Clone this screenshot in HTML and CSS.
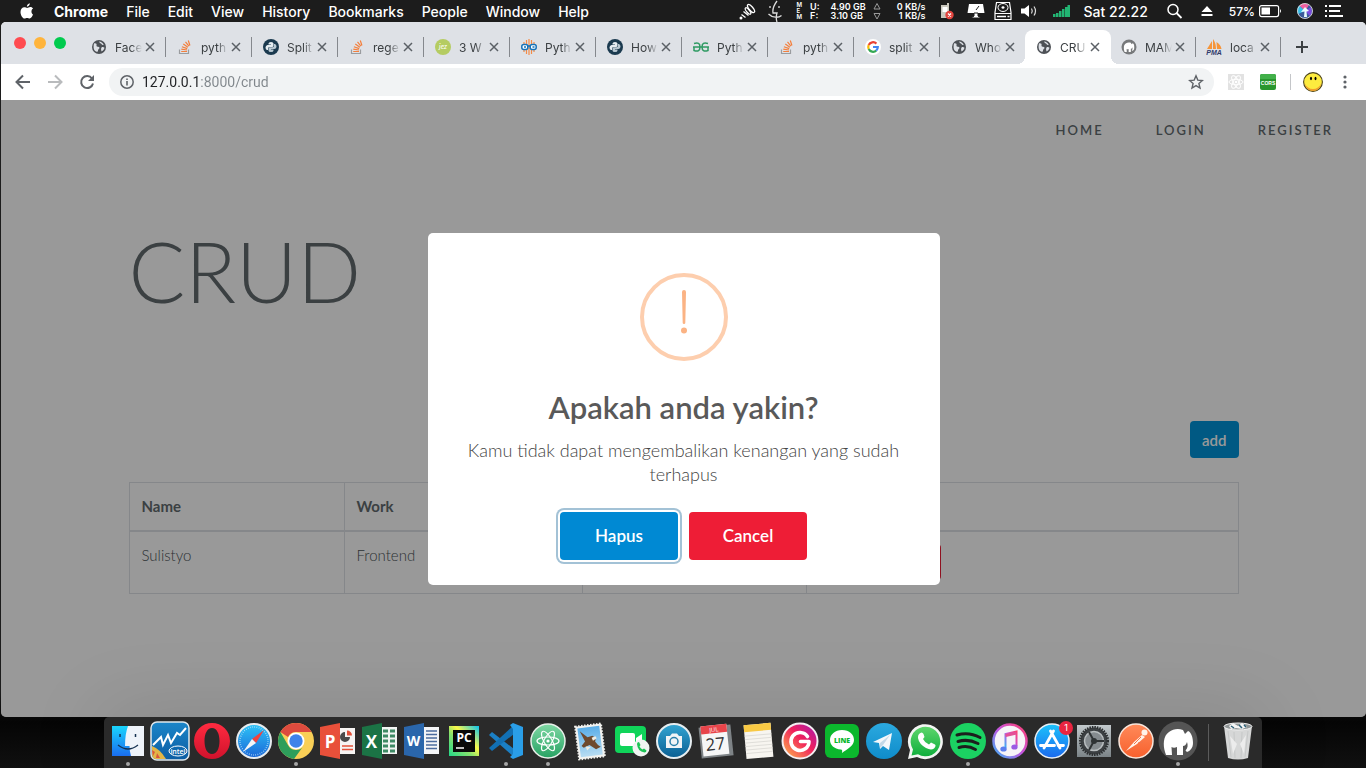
FILE: index.html
```html
<!DOCTYPE html>
<html lang="id">
<head>
<meta charset="utf-8">
<meta name="viewport" content="width=device-width, initial-scale=1">
<title>CRUD</title>
<link rel="stylesheet" href="styles.css">
</head>
<body>
<svg class="defs" aria-hidden="true">
  <defs>
    <linearGradient id="gFinder" x2="0" y2="1"><stop stop-color="#1ad5fd"/><stop offset="1" stop-color="#1a6df0"/></linearGradient>
    <linearGradient id="gIntel" x2="0" y2="1"><stop stop-color="#1c86c9"/><stop offset="1" stop-color="#0c5da3"/></linearGradient>
    <linearGradient id="gOpera" x2="0" y2="1"><stop stop-color="#ff2b40"/><stop offset="1" stop-color="#d0122c"/></linearGradient>
    <linearGradient id="gSafari" x2="0" y2="1"><stop stop-color="#2dc4f7"/><stop offset="1" stop-color="#1b67d8"/></linearGradient>
    <linearGradient id="gAtom" x2="0" y2="1"><stop stop-color="#7fd8a4"/><stop offset="1" stop-color="#27a263"/></linearGradient>
    <linearGradient id="gSky" x2="0" y2="1"><stop stop-color="#5aaee8"/><stop offset="1" stop-color="#b7dcf2"/></linearGradient>
    <linearGradient id="gCam" x2="0" y2="1"><stop stop-color="#33a5d2"/><stop offset="1" stop-color="#0a5f93"/></linearGradient>
    <linearGradient id="gInsta" x1="1" y1="0" x2="0" y2="1"><stop stop-color="#a318b4"/><stop offset=".45" stop-color="#f0205c"/><stop offset="1" stop-color="#ffc04a"/></linearGradient>
    <linearGradient id="gTele" x2="0" y2="1"><stop stop-color="#2ba9df"/><stop offset="1" stop-color="#0f8cca"/></linearGradient>
    <linearGradient id="gWa" x2="0" y2="1"><stop stop-color="#5dd66c"/><stop offset="1" stop-color="#10ae3c"/></linearGradient>
    <linearGradient id="gTunes" x1="1" y1="0" x2="0" y2="1"><stop stop-color="#ff3d6c"/><stop offset=".5" stop-color="#c355e0"/><stop offset="1" stop-color="#36b4f5"/></linearGradient>
    <linearGradient id="gStore" x2="0" y2="1"><stop stop-color="#1cc3fb"/><stop offset="1" stop-color="#1a69ee"/></linearGradient>
    <linearGradient id="gPrefs" x2="0" y2="1"><stop stop-color="#c2c9cc"/><stop offset="1" stop-color="#7c8488"/></linearGradient>
    <linearGradient id="gPost" x2="0" y2="1"><stop stop-color="#ff8a5a"/><stop offset="1" stop-color="#f7602d"/></linearGradient>
    <linearGradient id="gPyc" x1="0" y1="1" x2="1" y2="0"><stop stop-color="#21d789"/><stop offset=".4" stop-color="#8be36c"/><stop offset=".6" stop-color="#fcf84a"/><stop offset="1" stop-color="#07c3f2"/></linearGradient>
  </defs>
  <symbol id="globe" viewBox="0 0 16 16"><circle cx="8" cy="8" r="7" fill="#4d5156"/><path d="M3 4.500C5 4 6 5 5.500 6.500S8 7.500 8.500 8.500 7 10 7 11.500 6 13 5 12.500C3 11.500 2 9 3 4.500ZM8 2.500c2 .2 4 1.500 4.700 3.200-1 .8-1.700.2-2.200-.7S8.500 4.500 8 2.500ZM10.500 8.500c1-.8 2.200-.4 3 .2-.4 1.800-1.500 3-2.800 3.700-.7-1-.9-2.500-.2-3.900Z" fill="#dee1e6"/></symbol>
  <symbol id="stack" viewBox="0 0 16 16"><path d="M2.500 10.500v4h9v-4" fill="none" stroke="#9a9c9f" stroke-width="1.200"/><path d="M4.200 12.500h5.800M4.300 10.200l5.700.8M4.900 7.700l5.300 1.900M6.300 5.100l4.600 3.100M8.500 2.900l3.400 4.200M11.300 1.500l1.600 5" stroke="#f47f3c" stroke-width="1.200"/></symbol>
  <symbol id="python" viewBox="0 0 16 16"><circle cx="8" cy="8" r="8" fill="#1b3a4f"/><path d="M5.500 4.500q0-1.500 2.500-1.500t2.500 1.500v2Q10.500 8 9 8H6.500Q5 8 5 9.500V11H4Q2.500 10.500 2.500 8.500T4.500 6H8v-.5H5.500Z" fill="#e6edf2"/><path d="M10.500 11.500q0 1.500-2.500 1.500t-2.500-1.500v-2Q5.500 8.300 7 8.300h2.500Q11 8.300 11 6.800V5h1q1.500.5 1.500 2.500T11.500 10H8v.5h2.500Z" fill="#b9c8d2"/></symbol>
  <symbol id="close" viewBox="0 0 10 10"><path d="M1 1l8 8M9 1l-8 8" stroke="#5b6066" stroke-width="1.500"/></symbol>
  <symbol id="mampGlyph" viewBox="0 0 30 27"><path d="M2 24C0 17 0 8 6 4c4-3 9-4 14-2l2 4 3-3c3 1 5 6 5 12 0 5-3 8-6 9l-1.500-1.500C25 20 25 17 24 14c-1 3-2.500 4-4 4v9h-6v-8c-2 1-4 1-5.500 0L9 27H3Z" fill="#fff"/></symbol>
</svg>

<div class="desktop">
  <header class="menubar">
    <nav class="menus" aria-label="Menu bar">
      <svg class="apple" viewBox="0 0 14 16"><path d="M9.800.3c.1 1.600-1.200 3.300-2.900 3.400C6.700 2.100 8.200.5 9.800.3ZM13 11.600c-.8 2-2 3.900-3.300 3.900-1 0-1.400-.6-2.600-.6s-1.600.6-2.600.6C2.600 15.500.5 12 .5 8.900.5 5.900 2.400 4.200 4.300 4.200c1.200 0 2 .7 2.900.7.800 0 1.700-.8 3.200-.8 1.100 0 2.100.6 2.700 1.500-2.300 1.400-2 4.900-.1 6Z" fill="#fff"/></svg>
      <a class="app-name" href="#">Chrome</a><a href="#">File</a><a href="#">Edit</a><a href="#">View</a><a href="#">History</a><a href="#">Bookmarks</a><a href="#">People</a><a href="#">Window</a><a href="#">Help</a>
    </nav>
    <div class="status">
      <svg width="17" height="18" viewBox="0 0 17 18"><g fill="none" stroke="#fff" stroke-width="1.300"><ellipse cx="12" cy="6.500" rx="2" ry="5" transform="rotate(-40 12 6.500)"/><ellipse cx="9" cy="9" rx="1.500" ry="4" transform="rotate(-40 9 9)"/><path d="M4.500 9.500l5 4M2.500 12.500l4 3"/></g><circle cx="2" cy="16" r="1.500" fill="#fff"/></svg>
      <svg width="23" height="22" viewBox="0 0 23 22"><path d="M12 1c-3 4-4.500 9-4 12h4c-1 3-1 6 0 9M3.500 14c4 4 10 4 13 1.500M5 6v2M14 6v2" fill="none" stroke="#ddd" stroke-width="1.300"/></svg>
      <div class="meters">
        <span class="mem-label"><span>M</span><span>E</span><span>M</span></span>
        <span class="meter-col mem-key"><span>U:</span><span>F:</span></span>
        <span class="meter-col"><span>4.90 GB</span><span>3.10 GB</span></span>
        <svg class="arrows" width="8" height="18" viewBox="0 0 8 18"><path d="M1 7l3-5.500L7 7ZM1 11.500l3 5.500 3-5.500Z" fill="none" stroke="#999"/></svg>
        <span class="meter-col rate"><span>0 KB/s</span><span>1 KB/s</span></span>
      </div>
      <svg width="18" height="18" viewBox="0 0 18 18"><path d="M1 3h6V1h2v15H1Z" fill="#c9c7bd"/><path d="M2.500 5h5v5h-5Z" fill="#fff"/><circle cx="9.500" cy="13" r="4.200" fill="#e2453f"/><path d="M8 11.500l3 3m0-3l-3 3" stroke="#fff" stroke-width="1.200"/></svg>
      <svg width="18" height="18" viewBox="0 0 18 18"><path d="M2 2h14l1.500 9H.5Z" fill="#fff"/><path d="M7 11h4v3l3 2H4l3-2ZM12 4L9 8" fill="#fff" stroke="#1c1c1c"/></svg>
      <svg width="18" height="20" viewBox="0 0 18 20"><path d="M2.500 1.500h13l1.500 10v7H1v-7ZM1 12.500h16" fill="none" stroke="#fff" stroke-width="1.200"/><ellipse cx="9" cy="6.500" rx="5" ry="4" fill="none" stroke="#fff"/><ellipse cx="9" cy="6.500" rx="1.500" ry="1.200" fill="#fff"/><path d="M3 15.500h9M13.500 15.500h2" stroke="#fff" stroke-width="1.500"/></svg>
      <svg width="17" height="14" viewBox="0 0 17 14"><path d="M0 4.500h3.500L8 1v12L3.500 9.500H0Z" fill="#fff"/><path d="M10.500 4.500q1.500 2.500 0 5M13 2.500q3 4.500 0 9" fill="none" stroke="#ddd" stroke-width="1.200"/></svg>
      <svg width="28" height="14" viewBox="0 0 28 14"><path d="M6 10h2.500v3H6ZM9 9h2.500v4H9ZM12 7h2.500v6H12ZM15 5h2.500v8H15ZM18 3h2.500v10H18ZM20.500 1H23v12h-2.500Z" fill="#22b573"/></svg>
      <time class="clock">Sat 22.22</time>
      <svg width="28" height="16" viewBox="0 0 28 16"><circle cx="16" cy="6.500" r="5" fill="none" stroke="#fff" stroke-width="1.500"/><path d="M19.500 10l5 5" stroke="#fff" stroke-width="1.800"/></svg>
      <svg width="26" height="14" viewBox="0 0 26 14"><path d="M13 2l5.500 6h-11ZM7.500 10h11v2h-11Z" fill="#fff"/></svg>
      <span class="battery">57%<svg width="26" height="14" viewBox="0 0 26 14"><rect x=".6" y="1.600" width="19" height="11" rx="2" fill="none" stroke="#fff" stroke-width="1.200"/><path d="M2.500 3.500h8.500v7H2.500ZM21 5q2 2 0 4Z" fill="#fff"/></svg></span>
      <svg width="22" height="18" viewBox="0 0 22 18"><circle cx="11" cy="9" r="7.500" fill="#3b5a9a"/><path d="M11 9L5 3.500Q9 0 15 3Z" fill="#ef5fa0"/><path d="M11 9L4 12Q2 7 5 3.500Z" fill="#38bfe8"/><path d="M11 9l6-4q2 5-1 9Z" fill="#7c4ae0"/><path d="M11 5l4 4-2.500.5L13 15h-3l.5-5.500L7 10Z" fill="#eafcff"/><circle cx="11" cy="9" r="7.500" fill="none" stroke="#ddd" stroke-width=".9"/></svg>
      <svg width="18" height="14" viewBox="0 0 18 14"><path d="M0 2h2M0 7h2M0 12h2M4 2h12M4 7h11M4 12h14" stroke="#fff" stroke-width="1.800"/></svg>
    </div>
  </header>

  <main class="window">
    <div class="tabstrip">
      <div class="lights"><button class="light red" aria-label="Close"></button><button class="light amber" aria-label="Minimize"></button><button class="light green" aria-label="Zoom"></button></div>
      <div class="tabs">
        <div class="tab"><svg class="fav"><use href="#globe"/></svg><a href="#">Face</a><button class="x" aria-label="Close tab"><svg><use href="#close"/></svg></button></div>
        <div class="tab"><svg class="fav"><use href="#stack"/></svg><a href="#">pyth</a><button class="x" aria-label="Close tab"><svg><use href="#close"/></svg></button></div>
        <div class="tab"><svg class="fav"><use href="#python"/></svg><a href="#">Split</a><button class="x" aria-label="Close tab"><svg><use href="#close"/></svg></button></div>
        <div class="tab"><svg class="fav"><use href="#stack"/></svg><a href="#">rege</a><button class="x" aria-label="Close tab"><svg><use href="#close"/></svg></button></div>
        <div class="tab"><svg class="fav" viewBox="0 0 16 16"><circle cx="8" cy="8" r="8" fill="#b5cc62"/><text x="8" y="10" class="fav-jez">jez</text></svg><a href="#">3 W</a><button class="x" aria-label="Close tab"><svg><use href="#close"/></svg></button></div>
        <div class="tab"><svg class="fav" viewBox="0 0 16 16"><path d="M3 3v10M5.500 1v14M8 0v16M10.500 1v14M13 3v10" stroke="#f58b46" stroke-width="1.200"/><rect x=".8" y="5.500" width="6" height="5" rx="2" fill="#fff" stroke="#1673b9" stroke-width="1.500"/><rect x="9.200" y="5.500" width="6" height="5" rx="2" fill="#fff" stroke="#1673b9" stroke-width="1.500"/><path d="M3 8h2M11.500 8h2M6.800 7h2.400" stroke="#1673b9" stroke-width="1.500"/></svg><a href="#">Pyth</a><button class="x" aria-label="Close tab"><svg><use href="#close"/></svg></button></div>
        <div class="tab"><svg class="fav"><use href="#python"/></svg><a href="#">How</a><button class="x" aria-label="Close tab"><svg><use href="#close"/></svg></button></div>
        <div class="tab"><svg class="fav" viewBox="0 0 16 16"><path d="M1 4.500q6-2 6 3.500t-6 3.500V8M15 4.500q-6-2-6 3.500t6 3.500V8M0 8h16" fill="none" stroke="#2f9a63" stroke-width="1.500"/></svg><a href="#">Pyth</a><button class="x" aria-label="Close tab"><svg><use href="#close"/></svg></button></div>
        <div class="tab"><svg class="fav"><use href="#stack"/></svg><a href="#">pyth</a><button class="x" aria-label="Close tab"><svg><use href="#close"/></svg></button></div>
        <div class="tab"><svg class="fav" viewBox="0 0 16 16"><circle cx="8" cy="8" r="8" fill="#fff"/><g fill="none" stroke-width="2.200"><path d="M11.400 4.600A4.800 4.800 0 0 0 3.700 6" stroke="#ea4335"/><path d="M3.700 6a4.800 4.800 0 0 0 0 4" stroke="#fbbc05"/><path d="M3.700 10a4.800 4.800 0 0 0 7.500 1.600" stroke="#34a853"/><path d="M11.200 11.600A4.800 4.800 0 0 0 12.800 8H8" stroke="#4285f4"/></g></svg><a href="#">split</a><button class="x" aria-label="Close tab"><svg><use href="#close"/></svg></button></div>
        <div class="tab before-active"><svg class="fav"><use href="#globe"/></svg><a href="#">Who</a><button class="x" aria-label="Close tab"><svg><use href="#close"/></svg></button></div>
        <div class="tab active"><svg class="fav"><use href="#globe"/></svg><a href="#" aria-current="page">CRU</a><button class="x" aria-label="Close tab"><svg><use href="#close"/></svg></button></div>
        <div class="tab"><svg class="fav" viewBox="0 0 16 16"><circle cx="8" cy="8" r="7.500" fill="#77797b"/><use href="#mampGlyph" x="2.500" y="3" width="11" height="10"/></svg><a href="#">MAM</a><button class="x" aria-label="Close tab"><svg><use href="#close"/></svg></button></div>
        <div class="tab"><svg class="fav" viewBox="0 0 16 16"><path d="M1 10L6 2v8ZM7 10V0q3 4 3 10ZM11 10l-.5-7Q15 6 15.500 10Z" fill="#f6953a"/><text x="8" y="15.500" class="fav-pma">PMA</text></svg><a href="#">loca</a><button class="x" aria-label="Close tab"><svg><use href="#close"/></svg></button></div>
        <button class="new-tab" aria-label="New tab"><svg viewBox="0 0 12 12"><path d="M6 0v12M0 6h12" stroke="#3c4043" stroke-width="2"/></svg></button>
      </div>
    </div>

    <div class="toolbar">
      <button class="tool" aria-label="Back"><svg viewBox="0 0 16 16"><path d="M15 8H2M8 1.500L1.500 8 8 14.500" fill="none" stroke="#5f6368" stroke-width="2"/></svg></button>
      <button class="tool" aria-label="Forward"><svg viewBox="0 0 16 16"><path d="M1 8h13M8 1.500L14.500 8 8 14.500" fill="none" stroke="#b9bbbd" stroke-width="2"/></svg></button>
      <button class="tool" aria-label="Reload"><svg viewBox="0 0 16 16"><path d="M13 4.500A6 6 0 1 0 14 9.500" fill="none" stroke="#5f6368" stroke-width="2"/><path d="M15 1v6H9Z" fill="#5f6368"/></svg></button>
      <div class="omnibox">
        <svg class="info" viewBox="0 0 14 14"><circle cx="7" cy="7" r="6.200" fill="none" stroke="#5f6368" stroke-width="1.500"/><path d="M7 6v4.500M7 3.500V5" stroke="#5f6368" stroke-width="1.600"/></svg>
        <input class="url" type="text" aria-label="Address" value="127.0.0.1:8000/crud">
        <button class="star" aria-label="Bookmark"><svg viewBox="0 0 16 16"><path d="M8 1.800l1.800 4.300 4.600.4-3.500 3 1.100 4.600-4-2.500-4 2.500 1.100-4.600-3.500-3 4.600-.4Z" fill="none" stroke="#5f6368" stroke-width="1.400"/></svg></button>
      </div>
      <div class="extensions">
        <button class="ext" aria-label="React"><svg viewBox="0 0 16 16"><path d="M0 0h16v16H0Z" fill="#e2e2e2"/><g fill="none" stroke="#fff"><ellipse cx="8" cy="8" rx="7" ry="2.700"/><ellipse cx="8" cy="8" rx="7" ry="2.700" transform="rotate(60 8 8)"/><ellipse cx="8" cy="8" rx="7" ry="2.700" transform="rotate(120 8 8)"/></g><circle cx="8" cy="8" r="1.300" fill="#fff"/></svg></button>
        <button class="ext" aria-label="CORS"><svg viewBox="0 0 16 16"><rect width="16" height="16" rx="2" fill="#29962e"/><path d="M0 2q0-2 2-2h12q2 0 2 2v3H0Z" fill="#42b04a"/><text x="8" y="10.500" class="ext-cors">CORS</text></svg></button>
        <span class="divider"></span>
        <button class="avatar" aria-label="Profile"><svg viewBox="0 0 20 20"><circle cx="10" cy="10" r="9.400" fill="#fdec3f" stroke="#4c4420" stroke-width="1.100"/><path d="M1.500 11q2 8 8.500 8t8.500-8q-3 6-8.500 6t-8.500-6Z" fill="#f2a02c"/><ellipse cx="8" cy="6.500" rx="1" ry="1.800"/><ellipse cx="12.500" cy="6.500" rx="1" ry="1.800"/></svg></button>
        <button class="more" aria-label="Menu"><svg viewBox="0 0 4 16"><g fill="#5f6368"><circle cx="2" cy="3" r="1.600"/><circle cx="2" cy="8" r="1.600"/><circle cx="2" cy="13" r="1.600"/></g></svg></button>
      </div>
    </div>

    <section class="page">
      <nav class="site-nav"><a href="#">Home</a><a href="#">Login</a><a href="#">Register</a></nav>
      <div class="container">
        <h1>CRUD</h1>
        <div class="actions"><button class="btn">add</button></div>
        <table>
          <colgroup><col class="c-name"><col class="c-work"><col class="c-mid"><col></colgroup>
          <thead><tr><th>Name</th><th>Work</th><th></th><th></th></tr></thead>
          <tbody><tr><td>Sulistyo</td><td>Frontend</td><td></td><td><div class="row-actions"><button class="btn danger" aria-label="Hapus"></button></div></td></tr></tbody>
        </table>
      </div>

      <div class="backdrop">
        <div class="modal" role="dialog" aria-modal="true" aria-labelledby="ask">
          <svg class="warn" viewBox="0 0 88 88"><circle cx="44" cy="44" r="42" fill="none" stroke="#fdceae" stroke-width="4"/><path d="M42 19q0-2 2-2t2 2l-.7 31q0 1-1.300 1t-1.300-1Z" fill="#fbb384"/><circle cx="44" cy="57.500" r="3" fill="#fbb384"/></svg>
          <h2 id="ask">Apakah anda yakin?</h2>
          <p>Kamu tidak dapat mengembalikan kenangan yang sudah terhapus</p>
          <div class="choices"><button class="choice confirm">Hapus</button><button class="choice cancel">Cancel</button></div>
        </div>
      </div>
    </section>
  </main>

  <footer class="dock-area">
    <nav class="dock" aria-label="Dock">
      <a href="#" class="on" aria-label="Finder"><svg viewBox="0 0 42 42"><path d="M5 6h32v30H5Z" fill="url(#gFinder)"/><path d="M21 6h16v30H24q-1.500-5-1.500-10H18Q18 14 21 6Z" fill="#eef3fa"/><path d="M13 14v3M28.500 14v3" stroke="#143050" stroke-width="1.500"/><path d="M11 25q10 8 20 0" fill="none" stroke="#143050" stroke-width="1.300"/></svg></a>
      <a href="#" aria-label="Intel"><svg viewBox="0 0 42 42"><rect x="2" y="2" width="38" height="38" rx="6" fill="url(#gIntel)" stroke="#dfe7ec" stroke-width="1.500"/><path d="M3 26q8 3 14 13H7q-4 0-4-5Z" fill="#e1b647"/><path d="M3 30l3 2-2 4ZM8 33l3 5H7Z" fill="#d9553d"/><path d="M4 25l8-8 2 8 5-10 3 8 6-10 3 2 6-7" fill="none" stroke="#fff" stroke-width="2"/><ellipse cx="29" cy="31" rx="9" ry="5" fill="none" stroke="#fff"/><text x="29" y="33.500" class="t-intel">intel</text></svg></a>
      <a href="#" aria-label="Opera"><svg viewBox="0 0 42 42"><path fill-rule="evenodd" d="M21 3a18 18 0 1 1 0 36 18 18 0 0 1 0-36Zm0 5c-5 0-7.500 6-7.500 13s2.500 13 7.500 13 7.500-6 7.500-13-2.500-13-7.500-13Z" fill="url(#gOpera)"/></svg></a>
      <a href="#" aria-label="Safari"><svg viewBox="0 0 42 42"><circle cx="21" cy="21" r="17" fill="url(#gSafari)" stroke="#e7ebee" stroke-width="2"/><circle cx="21" cy="21" r="14" fill="none" stroke="#bfe5fa" stroke-width="1.500" stroke-dasharray=".6 1.600"/><path d="M31 10L23 23l-4-4Z" fill="#f2433f"/><path d="M10 32l9-13 4 4Z" fill="#f3f5f7"/></svg></a>
      <a href="#" class="on" aria-label="Chrome"><svg viewBox="0 0 42 42"><circle cx="21" cy="21" r="18" fill="#f9cf56"/><path d="M5.400 12a18 18 0 0 1 31.200 0H21a9 9 0 0 0-8 5Z" fill="#dd4b3e"/><path d="M5.400 12a18 18 0 0 0 13.600 26.900L28.800 25.500A9 9 0 0 1 13.200 25.500Z" fill="#2e9e5b"/><circle cx="21" cy="21" r="8.500" fill="#fff"/><circle cx="21" cy="21" r="6.700" fill="#3f83ea"/></svg></a>
      <a href="#" aria-label="PowerPoint"><svg viewBox="0 0 42 42"><path d="M20 8h18v26H20Z" fill="#f6f4f3"/><path d="M28 12a5 5 0 1 0 5 5h-5Z" fill="#4a4a4a"/><path d="M30 10.500a5 5 0 0 1 5 5h-5Z" fill="#e2513a"/><path d="M25 26h11M25 29.500h11" stroke="#e2513a" stroke-width="1.500"/><path d="M3 7l20-4v36L3 35Z" fill="#e8503a"/><text x="13" y="27.500" class="t-office">P</text></svg></a>
      <a href="#" aria-label="Excel"><svg viewBox="0 0 42 42"><path d="M20 7h18v27H20Z" fill="#f2f5f3"/><path d="M24 11h5M24 16h5M24 21h5M24 26h5M24 31h5M31 11h5M31 16h5M31 21h5M31 26h5M31 31h5" stroke="#3e8a65" stroke-width="3"/><path d="M3 7l20-4v36L3 35Z" fill="#1b7345"/><text x="12.500" y="27.500" class="t-office">X</text></svg></a>
      <a href="#" aria-label="Word"><svg viewBox="0 0 42 42"><path d="M20 7h18v27H20Z" fill="#f4f5f7"/><path d="M25 11h11M25 14.500h11M25 18h11M25 21.500h11M25 25h11M25 28.500h11" stroke="#4c6c9e" stroke-width="1.300"/><path d="M3 7l20-4v36L3 35Z" fill="#2a66ab"/><text x="12.500" y="26" class="t-word">W</text></svg></a>
      <a href="#" aria-label="PyCharm"><svg viewBox="0 0 42 42"><path d="M6 6h30v30H6Z" fill="url(#gPyc)"/><path d="M10 10h22v22H10Z" fill="#0a0a0a"/><text x="21" y="21.500" class="t-pc">PC</text><path d="M13 28h8" stroke="#fff" stroke-width="1.500"/></svg></a>
      <a href="#" class="on" aria-label="VS Code"><svg viewBox="0 0 42 42"><path d="M4 15l3-3 22 17v8Z" fill="#1b7fc4"/><path d="M4 28l3 3 22-17V5Z" fill="#1270b4"/><path d="M28 3l10 4v28l-10 4-3-2 3-3V9l-3-4Z" fill="#2a9ee8"/></svg></a>
      <a href="#" class="on" aria-label="Atom"><svg viewBox="0 0 42 42"><circle cx="21" cy="21" r="17" fill="url(#gAtom)" stroke="#e8efe9" stroke-width="1.500"/><g fill="none" stroke="#fff" stroke-width="1.200"><ellipse cx="21" cy="21" rx="11" ry="4"/><ellipse cx="21" cy="21" rx="11" ry="4" transform="rotate(60 21 21)"/><ellipse cx="21" cy="21" rx="11" ry="4" transform="rotate(120 21 21)"/></g><circle cx="21" cy="21" r="1.600" fill="#fff"/></svg></a>
      <a href="#" aria-label="Mail"><svg viewBox="0 0 42 42"><g transform="rotate(-7 21 21)"><path d="M8 5h26v33H8Z" fill="#f2f2ef" stroke="#f2f2ef" stroke-width="2" stroke-dasharray="1.500 1.500"/><path d="M10 7h22v29H10Z" fill="url(#gSky)"/><path d="M12 10l7 7 5-1q4 3 2 6 2 4 5 6l-5 2-6-5-6 2-2-2 4-4Z" fill="#6e4a2e"/><path d="M23 18l4-1 1 2-4 2ZM16 26l5 1-4 3Z" fill="#f0ece0"/></g></svg></a>
      <a href="#" aria-label="FaceTime"><svg viewBox="0 0 42 42"><rect x="4" y="6" width="31" height="27" rx="4" fill="#10d45a"/><rect x="9" y="13" width="15" height="13" rx="2" fill="#fff"/><path d="M25 18l6-4v11l-6-4Z" fill="#fff"/><circle cx="30" cy="28" r="8.500" fill="#f1f4f2"/><path d="M26 24q0-2 2-2l1.500 3-1 1.500q1 2 3 3l1.500-1 2.500 2q0 2-2 2-7-1-7.500-8.500Z" fill="#1cc455"/></svg></a>
      <a href="#" aria-label="Camera"><svg viewBox="0 0 42 42"><circle cx="21" cy="21" r="17" fill="url(#gCam)" stroke="#e6edf0" stroke-width="2"/><path d="M13 16h4l2-2.500h5l2 2.500h3v12H13Z" fill="#f1f4f6"/><circle cx="21" cy="21.500" r="4" fill="#f1f4f6" stroke="#2a7fa9" stroke-width="1.500"/></svg></a>
      <a href="#" aria-label="Calendar"><svg viewBox="0 0 42 42"><g transform="rotate(-6 21 21)"><path d="M5 6h32v31H5Z" fill="#7e8386"/><path d="M7 5h26v30H7Z" fill="#f6f6f6"/><path d="M7 5h26v8H7Z" fill="#e8444a"/><text x="20" y="11.500" class="t-jul">JUL</text><text x="20" y="30" class="t-day">27</text></g></svg></a>
      <a href="#" aria-label="Notes"><svg viewBox="0 0 42 42"><g transform="rotate(-5 21 21)"><path d="M8 4h27v34H8Z" fill="#f7f5f0"/><path d="M8 4h27v7H8Z" fill="#f8c944"/><path d="M8 15h27M8 18.500h27M8 22h27M8 25.500h27M8 29h27M8 32.500h27" stroke="#d9d8d4" stroke-width=".8"/></g></svg></a>
      <a href="#" aria-label="Grids"><svg viewBox="0 0 42 42"><circle cx="21" cy="21" r="17.500" fill="url(#gInsta)" stroke="#f4eef2" stroke-width="2"/><path d="M28.500 16.500A9 9 0 1 0 30 21.500H21.500" fill="none" stroke="#fff" stroke-width="3.600" stroke-linecap="round" stroke-linejoin="round"/></svg></a>
      <a href="#" aria-label="LINE"><svg viewBox="0 0 42 42"><rect x="4" y="4" width="34" height="34" rx="6" fill="#0bb82d"/><path d="M21 10c7.500 0 12 4.500 12 10 0 6-7 9-12 13 .5-3 0-3-1-3.500C13 29 9 25 9 20c0-5.500 5-10 12-10Z" fill="#fff"/><text x="21" y="22.500" class="t-line">LINE</text></svg></a>
      <a href="#" aria-label="Telegram"><svg viewBox="0 0 42 42"><circle cx="21" cy="21" r="18" fill="url(#gTele)"/><path d="M10 22l19-9-3 17-6-4-3 3-1-6Z" fill="#f4f8fb"/><path d="M17 23l10-8-7 10-3 3Z" fill="#c3d9e8"/></svg></a>
      <a href="#" aria-label="WhatsApp"><svg viewBox="0 0 42 42"><path d="M3 39l2-9a17.500 17.500 0 1 1 7 7Z" fill="#f3f5f3"/><path d="M6.500 35.500l1.500-6a14.800 14.800 0 1 1 5 4.800Z" fill="url(#gWa)"/><path d="M14 14q3-3 4.500 0l1 3-1.500 2q2 4 6 5.500l2-2 4 2q1.500 1-1 4-3 2-8-.5-7-4-8-10-.2-2.500 1-4Z" fill="#fff"/></svg></a>
      <a href="#" class="on" aria-label="Spotify"><svg viewBox="0 0 42 42"><circle cx="21" cy="21" r="18" fill="#1bd262"/><path d="M10 15q12-3.500 23 2.500M11 21.500q10-3 20 2M12 27.500q9-2.500 16.500 2" fill="none" stroke="#1c1f1d" stroke-width="3" stroke-linecap="round"/></svg></a>
      <a href="#" aria-label="iTunes"><svg viewBox="0 0 42 42"><circle cx="21" cy="21" r="16.500" fill="#f6f4f8" stroke="url(#gTunes)" stroke-width="2.500"/><path d="M16.500 28V14l11-2.500V26" fill="none" stroke="url(#gTunes)" stroke-width="2"/><path d="M16.500 15.500l11-2.500" stroke="#e44f96" stroke-width="3"/><ellipse cx="14.500" cy="29" rx="3.200" ry="2.600" fill="#5a7df0"/><ellipse cx="25.500" cy="27" rx="3.200" ry="2.600" fill="#9a5be4"/></svg></a>
      <a href="#" aria-label="App Store"><svg viewBox="0 0 42 42"><circle cx="21" cy="21" r="17" fill="url(#gStore)" stroke="#e8eff5" stroke-width="1.500"/><path d="M22.500 11L13 28M19.500 11L29 28M9.500 25.500h14M27 25.500h5.500" stroke="#fff" stroke-width="2.800" stroke-linecap="round"/></svg><span class="badge">1</span></a>
      <a href="#" aria-label="Preferences"><svg viewBox="0 0 42 42"><path d="M4 5h34v32H4Z" fill="url(#gPrefs)"/><circle cx="21" cy="21" r="13.500" fill="#3c4043"/><circle cx="21" cy="21" r="13.800" fill="none" stroke="#2c2f31" stroke-width="2.500" stroke-dasharray="1.500 1"/><circle cx="21" cy="21" r="9.500" fill="#858b8f" stroke="#b9bec0" stroke-width="1.500"/><circle cx="21" cy="21" r="3" fill="#2f3335"/><path d="M21 21h10M21 21l-5-9M21 21l-5 9" stroke="#2f3335" stroke-width="2"/></svg></a>
      <a href="#" aria-label="Postman"><svg viewBox="0 0 42 42"><circle cx="21" cy="21" r="17" fill="url(#gPost)" stroke="#f7e6dc" stroke-width="1.500"/><circle cx="29.500" cy="12.500" r="3" fill="#fff3ea"/><path d="M27 15l3 2-8 7-11 7 8-9Z" fill="#fff3ea"/><path d="M26 17l-7 7M23 23l5-1" stroke="#f2744a"/></svg></a>
      <a href="#" class="on" aria-label="MAMP"><svg viewBox="0 0 42 42"><circle cx="21" cy="21" r="19.500" fill="#555"/><use href="#mampGlyph" x="6" y="8" width="30" height="27"/></svg></a>
      <span class="dock-sep"></span>
      <a href="#" aria-label="Trash"><svg viewBox="0 0 42 42"><path d="M7 6h28l-4 32q-10 3-20 0Z" fill="#d6d7d7"/><path d="M11 11l3 26M31 11l-3 26M17 12l1 26M25 12l-1 26" stroke="#c6c8c8"/><path d="M13 16l7 8-4 10ZM29 15l-6 9 4 10Z" fill="#ececec"/><ellipse cx="21" cy="6.500" rx="14" ry="3.500" fill="#8f9596" stroke="#f1f1f1"/><path d="M12 6l4-3 5 3 4-3 5 4-5 2-6-1-5 1Z" fill="#f4f4f4"/><path d="M14 6l3 2M22 5l3 3M27 5l2 2" stroke="#2a5f77" stroke-width="1.500"/></svg></a>
    </nav>
  </footer>
</div>
</body>
</html>
```
FILE: styles.css
```css
*, *::before, *::after { box-sizing: border-box; }
body { margin: 0; background: #0a0a0a; font-family: Inter, "Liberation Sans", sans-serif; }
a { color: inherit; text-decoration: none; }
button { padding: 0; border: 0; background: none; font: inherit; color: inherit; }
svg { display: block; flex: none; }
.defs { position: absolute; width: 0; height: 0; }
.desktop { display: flex; flex-direction: column; min-height: 100vh; background: linear-gradient(#1c1c1c 90%, #050505 94%, #101010); }

/* Menu bar */
.menubar { display: flex; justify-content: space-between; align-items: center; height: 22px; padding: 0 23px 0 20px; background: #1c1c1c; color: #fff; font-size: 14px; overflow: hidden; }
.menus { display: flex; align-items: center; gap: 18px; font-weight: 500; }
.app-name { font-weight: 700; }
.apple { width: 14px; height: 16px; margin-right: 2px; }
.status { display: flex; align-items: center; gap: 9px; }
.meters { display: flex; align-items: center; font-size: 9px; line-height: 9px; font-weight: 600; }
.meter-col { display: flex; flex-direction: column; white-space: nowrap; }
.mem-label { display: flex; flex-direction: column; font-size: 6px; line-height: 6px; }
.mem-key { margin: 0 11px 0 8px; }
.arrows { margin-left: 7px; }
.rate { margin: 0 5px 0 16px; text-align: right; }
.clock { font-weight: 500; white-space: nowrap; }
.battery { display: flex; align-items: center; gap: 4px; font-size: 12px; font-weight: 500; }

/* Browser window */
.window { flex: 1; display: flex; flex-direction: column; margin-left: 1px; border-radius: 5px; overflow: hidden; background: #fff; }
.tabstrip { display: flex; align-items: flex-end; height: 42px; background: #dee1e6; }
.lights { display: flex; gap: 8px; width: 79px; padding: 0 0 15px 13px; }
.light { width: 12px; height: 12px; border-radius: 50%; }
.red { background: #ff4b50; }
.amber { background: #ffb43c; }
.green { background: #00cb4e; }
.tabs { display: flex; flex: 1; align-items: stretch; height: 34px; }
.tab { position: relative; display: flex; align-items: center; flex: 0 1 86px; min-width: 0; padding: 0 11px; font-size: 12px; color: #3c4043; }
.tab::after { content: ""; position: absolute; right: 0; top: 7px; width: 1px; height: 20px; background: #85888d; }
.tab.before-active::after { display: none; }
.tab.active { z-index: 1; background: #fff; border-radius: 8px 8px 0 0; }
.tab.active, .tab.active ~ .tab { margin-left: -1px; }
.tab.active::before, .tab.active::after { content: ""; position: absolute; top: auto; bottom: 0; width: 8px; height: 8px; }
.tab.active::before { left: -8px; background: radial-gradient(circle at 0 0, transparent 8px, #fff 8px); }
.tab.active::after { right: -8px; background: radial-gradient(circle at 100% 0, transparent 8px, #fff 8px); }
.fav { width: 16px; height: 16px; margin-right: 8px; }
.tab a { flex: 1; min-width: 0; white-space: nowrap; -webkit-mask-image: linear-gradient(90deg, #000 60%, transparent); mask-image: linear-gradient(90deg, #000 60%, transparent); }
.x { margin-left: 3px; }
.x svg { width: 10px; height: 10px; }
.fav-jez { font: italic 7px Lato, sans-serif; fill: #fff; text-anchor: middle; }
.fav-pma { font: italic 900 7px "Liberation Sans", sans-serif; fill: #303a6b; text-anchor: middle; }
.new-tab { margin-left: 15px; }
.new-tab svg { width: 12px; height: 12px; }

.toolbar { display: flex; align-items: center; height: 36px; padding: 0 19px 0 14px; background: #fff; }
.tool { margin-right: 16px; }
.tool svg, .ext svg { width: 16px; height: 16px; }
.tool:nth-child(3) { margin-right: 14px; }
.omnibox { display: flex; align-items: center; flex: 1; height: 28px; padding: 0 10px 0 11px; border-radius: 14px; background: #f1f3f4; }
.info { width: 14px; height: 14px; margin-right: 8px; }
.url { flex: 1; min-width: 0; padding: 0; border: 0; outline: 0; font: 14px Roboto, sans-serif; color: transparent; background: linear-gradient(90deg, #202124 57px, #80868b 57px); -webkit-background-clip: text; background-clip: text; }
.star svg { width: 16px; height: 16px; }
.extensions { display: flex; align-items: center; margin-left: 14px; }
.ext { margin-right: 16px; }
.ext:nth-child(2) { margin-right: 14px; }
.ext-cors { font: 700 5px "Liberation Sans", sans-serif; fill: #fff; text-anchor: middle; }
.divider { width: 1px; height: 16px; margin-right: 12px; background: #c4c6c9; }
.avatar svg { width: 20px; height: 20px; }
.more { margin-left: 20px; }
.more svg { width: 4px; height: 16px; }

/* Site */
.page { position: relative; flex: 1; padding-bottom: 24px; color: #636b6f; font-family: Lato, sans-serif; }
.site-nav { display: flex; justify-content: flex-end; gap: 52px; padding: 20px 33px 0 0; font-size: 13px; line-height: 20px; font-weight: 600; letter-spacing: 2px; text-transform: uppercase; }
.container { max-width: 1140px; margin: 0 auto; padding: 0 15px; }
h1 { margin: 68px 0 0; font-size: 84px; line-height: 126px; font-weight: 300; }
.actions { display: flex; justify-content: flex-end; padding: 87px 0 24px; }
.btn { height: 37px; padding: 0 12px; border-radius: 4px; background: #0095db; color: #fff; font-size: 15px; font-weight: 600; }
.btn.danger { width: 60px; height: 36px; background: #ee1d36; }
table { width: 100%; table-layout: fixed; border-collapse: collapse; font-size: 15px; line-height: 23px; }
.c-name { width: 215px; }
.c-work { width: 238px; }
.c-mid { width: 224px; }
th, td { padding: 12px; border: 1px solid #dee2e6; text-align: left; vertical-align: top; }
th { border-bottom-width: 2px; font-weight: 700; }
td { padding-bottom: 13px; font-weight: 300; color: #4b5357; }
.row-actions { display: flex; justify-content: flex-end; width: 122px; }

/* Confirmation dialog */
.backdrop { position: absolute; inset: 0; display: flex; align-items: center; justify-content: center; background: rgba(0, 0, 0, .4); }
.modal { display: flex; flex-direction: column; align-items: center; width: 512px; padding: 40px 20px 25px; border-radius: 5px; background: #fff; color: #444; text-align: center; }
.warn { width: 88px; height: 88px; }
h2 { margin: 25px 0 9px; font-size: 31px; line-height: 43px; font-weight: 600; color: #595959; }
.modal p { margin: 0; font-size: 18px; line-height: 24px; font-weight: 300; }
.choices { display: flex; gap: 11px; margin: 26px 0 0; }
.choice { width: 118px; height: 48px; border-radius: 4px; color: #fff; font-size: 17px; font-weight: 600; }
.confirm { background: #0089d3; box-shadow: 0 0 0 2px #fff, 0 0 0 4px #a3c2d6; }
.cancel { background: #ee1d36; }

/* Dock */
.dock-area { display: flex; justify-content: center; height: 51px; }
.dock { display: flex; align-items: flex-start; padding: 3px 3px 0; border-radius: 5px 5px 0 0; background: #2a2a2a; box-shadow: 0 0 80px rgba(0, 0, 0, .15); }
.dock a { position: relative; width: 42px; height: 48px; }
.dock svg { width: 42px; height: 42px; }
.dock .on::after { content: ""; position: absolute; left: 19px; top: 42px; width: 4px; height: 4px; border-radius: 50%; background: #a6a6a6; }
.dock-sep { width: 1px; height: 37px; margin: 4px 8px 0 9px; background: #5b5b5b; }
.badge { position: absolute; right: 0; top: 1px; width: 14px; height: 14px; border-radius: 50%; background: #ea2440; color: #fff; font-size: 9px; line-height: 14px; text-align: center; }
.dock text { text-anchor: middle; fill: #fff; font-family: "Open Sans", sans-serif; }
.dock .t-intel { font-size: 7px; font-weight: 600; }
.dock .t-office { font-size: 17px; font-weight: 700; }
.dock .t-word { font-size: 14px; font-weight: 700; }
.dock .t-pc { font-size: 12px; font-weight: 700; }
.dock .t-jul { font-size: 6px; }
.dock .t-day { font-size: 17px; fill: #333; }
.dock .t-line { font-size: 7px; font-weight: 800; fill: #0bb82d; }
```
